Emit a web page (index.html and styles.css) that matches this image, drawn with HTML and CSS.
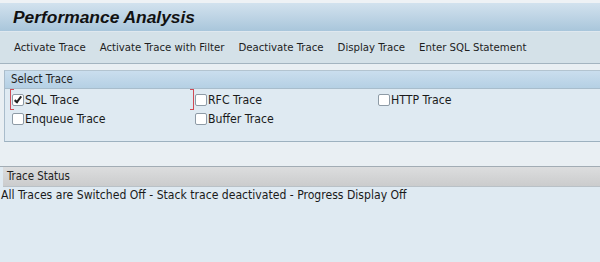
FILE: index.html
```html
<!DOCTYPE html>
<html lang="en">
<head>
<meta charset="UTF-8">
<title>Performance Analysis</title>
<link rel="stylesheet" href="styles.css">
</head>
<body>

<div class="titlebar">
    <h1>Performance Analysis</h1>
</div>

<div class="toolbar">
    <button class="tool">Activate Trace</button>
    <button class="tool">Activate Trace with Filter</button>
    <button class="tool">Deactivate Trace</button>
    <button class="tool">Display Trace</button>
    <button class="tool">Enter SQL Statement</button>
</div>

<div class="content">
    <section class="group select-group">
        <div class="group-head">Select Trace</div>
        <div class="trace-grid">
            <label class="option focused"><span class="box checked"></span>SQL Trace</label>
            <label class="option"><span class="box"></span>RFC Trace</label>
            <label class="option"><span class="box"></span>HTTP Trace</label>
            <label class="option"><span class="box"></span>Enqueue Trace</label>
            <label class="option"><span class="box"></span>Buffer Trace</label>
        </div>
    </section>

    <section class="group status-group">
        <div class="group-head">Trace Status</div>
        <p class="status-text">All Traces are Switched Off - Stack trace deactivated - Progress Display Off</p>
    </section>
</div>

</body>
</html>
```

FILE: styles.css
```css
html {
    overflow: hidden;
}

body {
    margin: 0;
    font-family: Tahoma, "DejaVu Sans Condensed", "Liberation Sans", sans-serif;
    font-size: 11.4px;
    color: #222;
    background-color: #e9eff3;
    width: 600px;
    height: 262px;
    display: flex;
    flex-direction: column;
    overflow: hidden;
}

.titlebar {
    height: 28px;
    flex-shrink: 0;
    border-top: 3px solid #eef2f5;
    border-bottom: 1px solid #dfe8ef;
    background: linear-gradient(#d2e2ee, #a9c6db);
    padding-left: 13px;
}

.titlebar h1 {
    margin: 0;
    font-family: "Liberation Sans", Arial, sans-serif;
    font-size: 17.4px;
    font-style: italic;
    font-weight: bold;
    line-height: 28px;
    color: #111;
}

.toolbar {
    height: 31px;
    flex-shrink: 0;
    display: flex;
    align-items: center;
    padding-left: 7px;
    background-color: #d4e1e8;
    border-bottom: 1px solid #a3b4c0;
}

.tool {
    border: none;
    background: none;
    font-family: inherit;
    font-size: 11.3px;
    color: #1e1e1e;
    padding: 0 7px;
    cursor: pointer;
}

.content {
    flex: 1;
    display: flex;
    flex-direction: column;
    padding-top: 6px;
}

.group {
    background-color: #dfeaf2;
}

.group-head {
    height: 17px;
    line-height: 17px;
}

.select-group {
    margin-left: 4px;
    border-left: 1px solid #a9bccb;
    border-top: 1px solid #b3c4d0;
    border-bottom: 1px solid #9db1bf;
}

.select-group .group-head {
    padding-left: 6px;
    background: linear-gradient(#cadeee, #b5d0e4);
    border-bottom: 1px solid #a8bdcc;
}

.trace-grid {
    display: grid;
    grid-template-columns: repeat(3, 183px);
    grid-auto-rows: 19px;
    padding: 1px 0 13px 5px;
}

.option {
    position: relative;
    display: flex;
    align-items: center;
    padding-left: 2px;
    font-size: 12.2px;
    color: #1a1a1a;
}

.box {
    width: 10px;
    height: 10px;
    margin-right: 1px;
    border: 1px solid #8e9ba6;
    border-radius: 2px;
    background-color: #fff;
    position: relative;
}

.box.checked::after {
    content: '';
    position: absolute;
    left: 3px;
    top: 0;
    width: 2px;
    height: 6px;
    border-right: 2px solid #222;
    border-bottom: 2px solid #222;
    transform: rotate(38deg);
}

/* red keyboard focus brackets */
.option.focused::before,
.option.focused::after {
    content: '';
    position: absolute;
    top: -1px;
    bottom: -1px;
    width: 3px;
    border-top: 1px solid #d04a55;
    border-bottom: 1px solid #d04a55;
}

.option.focused::before {
    left: 0;
    border-left: 1px solid #d04a55;
}

.option.focused::after {
    right: -1px;
    border-right: 1px solid #d04a55;
}

.status-group {
    flex: 1;
    margin-top: 24px;
    border-top: 1px solid #a2acb4;
}

.status-group .group-head {
    margin-left: 3px;
    padding-left: 4px;
    height: 19px;
    line-height: 19px;
    background: linear-gradient(#dcddde, #cbcccd);
    border-bottom: 1px solid #b9c1c7;
}

.status-text {
    margin: 0;
    padding-left: 1px;
    font-size: 12.1px;
    line-height: 16px;
    color: #1a1a1a;
}
```
